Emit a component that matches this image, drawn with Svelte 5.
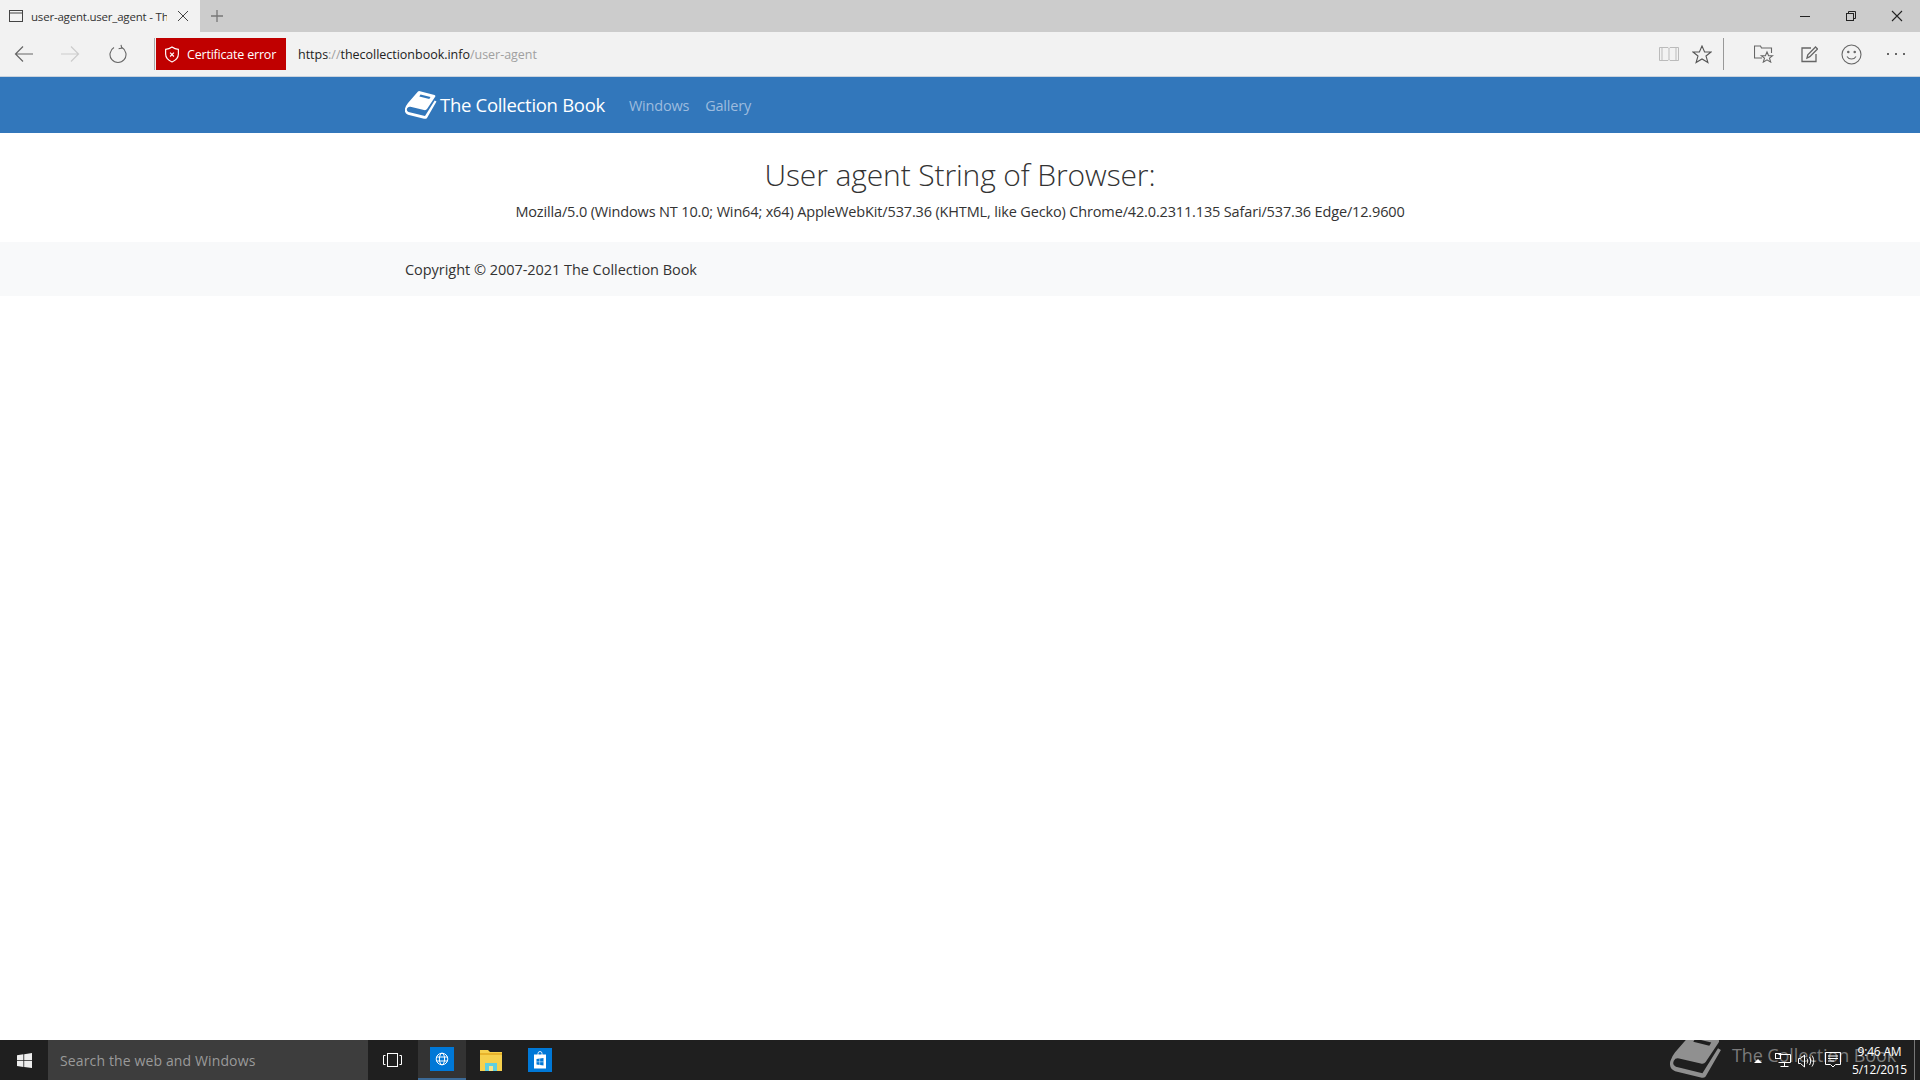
<script>
  const msg = "Mozilla/5.0 (Windows NT 10.0; Win64; x64) AppleWebKit/537.36 (KHTML, like Gecko) Chrome/42.0.2311.135 Safari/537.36 Edge/12.9600";
  const book = "M18 5.500Q18.800 4.800 20 5.200L34.500 9Q36 9.500 35 11L27 23Q26 24.500 24 24L10.500 20.800Q8.200 20.300 7.200 22.200Q6 25 8.500 26L25 30L34.700 14.500L36.500 15.500L27 32Q26 33.200 24 32.700L8 28.800Q4 27.300 5 22.500Q6 19.500 8 17Z";
</script>

<div class="screen">
  <div class="tabbar">
    <div class="tab">
      <svg class="tabicon" width="14" height="12" viewBox="0 0 14 12" fill="none" stroke="#444" stroke-width="1"><rect x=".5" y=".5" width="13" height="11"/><path d="M.5 3h13"/></svg>
      <span class="tabtitle">user-agent.user_agent - The Collection Book</span>
      <svg class="tabx" width="12" height="12" viewBox="0 0 12 12" stroke="#444" stroke-width="1"><path d="M1 1l10 10M11 1L1 11"/></svg>
    </div>
    <svg class="plus" width="12" height="12" viewBox="0 0 12 12" stroke="#777" stroke-width="1.3"><path d="M6 0v12M0 6h12"/></svg>
    <div class="spacer"></div>
    <div class="winbtns">
      <svg width="12" height="12" viewBox="0 0 12 12" stroke="#222"><path d="M1 6.500h10"/></svg>
      <svg width="12" height="12" viewBox="0 0 12 12" stroke="#222" fill="none"><rect x="1.500" y="3.500" width="7" height="7"/><path d="M3.500 3.500v-2h7v7h-2"/></svg>
      <svg width="12" height="12" viewBox="0 0 12 12" stroke="#222" stroke-width="1.100"><path d="M1 1l10 10M11 1L1 11"/></svg>
    </div>
  </div>

  <div class="toolbar">
    <svg class="nav n1" width="20" height="18" viewBox="0 0 20 18" fill="none" stroke="#666" stroke-width="1.200"><path d="M19 9H1.500M9 1.500L1.500 9 9 16.500"/></svg>
    <svg class="nav n2" width="20" height="18" viewBox="0 0 20 18" fill="none" stroke="#ccc" stroke-width="1.200"><path d="M1 9h17.500M11 1.500L18.500 9 11 16.500"/></svg>
    <svg class="nav n3" width="18" height="20" viewBox="0 0 18 20" fill="none" stroke="#666" stroke-width="1.100"><path d="M5 3.600a8 8 0 1 0 8 0M12 .8l.8 3.200-3.200.8"/></svg>
    <div class="divider"></div>
    <div class="cert">
      <svg width="16" height="17" viewBox="0 0 15 16" fill="none" stroke="#fff" stroke-width="1.100"><path d="M7.500 1c1.800 1.300 3.700 2 6 2.100v4.400c0 3.500-2.400 5.900-6 7.500-3.600-1.600-6-4-6-7.500V3.100C3.800 3 5.700 2.300 7.500 1z"/><path d="M5.700 6.300l3.600 3.600M9.300 6.300L5.700 9.900"/></svg>
      <span>Certificate error</span>
    </div>
    <div class="url"><span class="dark">https</span><span class="mute">://</span><span class="dark">thecollectionbook.info</span><span class="mute">/user-agent</span></div>
    <div class="spacer"></div>
    <svg class="tool t1" width="20" height="16" viewBox="0 0 20 16" fill="none" stroke="#bbb" stroke-width="1"><path d="M.5 1.500h8.500l1 1 1-1h8.500v13h-8.500l-1-1-1 1H.5zM10 2.500v11M3 1.500v13M17 1.500v13"/></svg>
    <svg class="tool t2" width="20" height="19" viewBox="0 0 20 19" fill="none" stroke="#555" stroke-width="1.100"><path d="M10 1l2.600 6h6.400l-5 4 1.900 6.500L10 14l-5.900 3.500L6 11 1 7h6.400z"/></svg>
    <div class="divider d2"></div>
    <svg class="tool t3" width="20" height="18" viewBox="0 0 20 18" fill="none" stroke="#666" stroke-width="1.100"><path d="M8 13H.5V1h6l1 2h10v5"/><path d="M13 7l1.600 3.700h4l-3.100 2.400 1.200 4-3.700-2.200-3.700 2.200 1.200-4-3.100-2.400h4z"/></svg>
    <svg class="tool t4" width="17" height="17" viewBox="0 0 17 17" fill="none" stroke="#666" stroke-width="1.300"><path d="M15 8v7.500H1V2h9"/><path d="M6 12l.8-3.200L14.500 1 16.500 3l-7.700 7.700z"/></svg>
    <svg class="tool t5" width="21" height="21" viewBox="0 0 21 21" fill="none" stroke="#666" stroke-width="1.100"><circle cx="10.500" cy="10.500" r="9.500"/><circle cx="7.300" cy="8" r=".7" fill="#666"/><circle cx="13.700" cy="8" r=".7" fill="#666"/><path d="M6 12.500c1.800 3.300 7.200 3.300 9 0"/></svg>
    <div class="dots"><i></i><i></i><i></i></div>
  </div>

  <nav class="navbar">
    <div class="container navinner">
      <a class="brand">
        <svg width="32" height="28" viewBox="5 5 32 28" fill="#fff"><path d={book}/><path d="M20.500 8.500L30.500 10.900 29.300 12.900 19.300 10.500Z" fill="#3277bb"/></svg>
        <span>The Collection Book</span>
      </a>
      <a class="link l1">Windows</a>
      <a class="link">Gallery</a>
    </div>
  </nav>

  <main>
    <h1>User agent String of Browser:</h1>
    <p>{msg}</p>
  </main>

  <footer>
    <div class="container">Copyright © 2007-2021 The Collection Book</div>
  </footer>

  <div class="spacer"></div>

  <div class="taskbar">
    <div class="start">
      <svg width="15" height="15" viewBox="0 0 15 15" fill="#eee"><path d="M0 2.200 6.400 1.300v5.900H0zM7.200 1.200 15 0v7.200H7.200zM0 8h6.400v5.900L0 13zM7.200 8H15v7l-7.800-1.100z"/></svg>
    </div>
    <div class="search">Search the web and Windows</div>
    <div class="tb view">
      <svg width="19" height="14" viewBox="0 0 19 14" fill="none" stroke="#fff"><rect x="4.500" y=".5" width="10" height="13"/><path d="M2.500 2.500H.5v9h2M16.500 2.500h2v9h-2"/></svg>
    </div>
    <div class="tb active">
      <div class="tile small">
        <svg width="14" height="14" viewBox="0 0 14 14" fill="none" stroke="#fff" stroke-width="1"><circle cx="7" cy="7" r="5.800"/><ellipse cx="7" cy="7" rx="2.600" ry="5.800"/><path d="M1.500 5h11M1.500 9h11"/></svg>
      </div>
    </div>
    <div class="tb explorer">
      <svg width="22" height="22" viewBox="0 0 22 22"><path d="M0 1h8l2 2h12v19H0z" fill="#f6d04d"/><path d="M0 4h22v2H0z" fill="#e8b32c"/><path d="M5 14h12v8H5z" fill="#5fcfe0"/><path d="M9 17h4v5H9z" fill="#f6e58d"/></svg>
    </div>
    <div class="tb">
      <div class="tile store">
        <svg width="14" height="18" viewBox="0 0 14 18"><path d="M5 4V2.500a2 2 0 0 1 4 0V4" fill="none" stroke="#dce9f7"/><path d="M1 3.500h12v14H1z" fill="#fff"/><path d="M3.500 8l7-1v7.500l-7-1z" fill="#0078d7"/><path d="M6.700 7.500v6.500M3.500 10.800h7" stroke="#fff" stroke-width=".5"/></svg>
      </div>
    </div>
    <div class="spacer"></div>
    <div class="tray">
      <svg class="wm-icon" width="52" height="45" viewBox="5 5 32 28" fill="#909090"><path d={book}/><path d="M20.500 8.500L30.500 10.900 29.300 12.900 19.300 10.500Z" fill="#1f1f1f"/></svg>
      <span class="wm">The Collection Book</span>
      <div class="trayicons">
        <svg class="caret" width="8" height="5" viewBox="0 0 8 5" fill="#fff"><path d="M0 5l4-4 4 4z"/></svg>
        <svg class="ti net" width="16" height="14" viewBox="0 0 16 14" fill="none" stroke="#fff"><path d="M3.500 1.500h12v8h-12M9.500 9.500v3.500M5.500 13.500h8"/><rect x=".5" y=".5" width="5" height="5"/></svg>
        <svg class="ti vol" width="17" height="14" viewBox="0 0 17 14" fill="none" stroke="#fff"><path d="M.5 4.500h2L6.500 1v12L2.500 9.500h-2zM9 4.500c1 1.500 1 3.500 0 5M11.500 3c1.600 2.500 1.600 5.500 0 8M14 1.500c2.300 3.500 2.300 7.500 0 11"/></svg>
        <svg class="ti msg" width="16" height="16" viewBox="0 0 16 16" fill="none" stroke="#fff"><path d="M.5.500h15v12h-5L8 15l-2.500-2.500h-5zM3 4h10M3 6.500h10M3 9h6"/></svg>
      </div>
      <div class="clock"><div>9:46 AM</div><div>5/12/2015</div></div>
      <div class="showdesk"></div>
    </div>
  </div>
</div>

<style>
  :global(body) { margin: 0; background: #fff; }
  .screen {
    width: 1920px; height: 1080px; display: flex; flex-direction: column; overflow: hidden;
    font-family: "Open Sans", "Noto Sans", sans-serif; color: #212529; background: #fff;
  }
  .spacer { flex: 1; }
  .tabbar { height: 32px; background: #ccc; display: flex; align-items: center; flex: none; }
  .tab { width: 200px; height: 32px; background: #f2f2f2; display: flex; align-items: center; box-sizing: border-box; padding-left: 9px; }
  .tabicon { flex: none; }
  .tabtitle { width: 136px; margin-left: 8px; overflow: hidden; white-space: nowrap; font-size: 11.500px; color: #333; letter-spacing: -.2px; }
  .tabx { margin-left: 10px; flex: none; }
  .plus { margin-left: 11px; }
  .winbtns { display: flex; gap: 34px; padding-right: 17px; align-items: center; }
  .toolbar { height: 44px; background: #f2f2f2; border-bottom: 1px solid #c9d3de; display: flex; align-items: center; flex: none; }
  .nav { flex: none; }
  .n1 { margin-left: 14px; }
  .n2 { margin-left: 26px; }
  .n3 { margin-left: 29px; }
  .divider { width: 1px; height: 32px; background: #aaa; margin-left: 27px; }
  .cert { width: 130px; height: 32px; margin-left: 1px; background: #c00000; color: #fff; display: flex; align-items: center; box-sizing: border-box; padding-left: 8px; font-size: 12.500px; letter-spacing: -.2px; }
  .cert span { margin-left: 7px; }
  .url { margin-left: 12px; font-size: 12.500px; letter-spacing: -.02px; }
  .dark { color: #222; }
  .mute { color: #a0a0a0; }
  .tool { flex: none; }
  .t2 { margin-left: 13px; }
  .d2 { margin-left: 11px; background: #999; }
  .t3 { margin-left: 30px; }
  .t4 { margin-left: 27px; }
  .t5 { margin-left: 23px; }
  .dots { display: flex; gap: 6px; margin-left: 25px; margin-right: 15px; }
  .dots i { width: 2px; height: 2px; background: #666; display: block; }
  .navbar { height: 56px; background: #3277bb; flex: none; }
  .container { width: 1110px; margin: 0 auto; }
  .navinner { height: 100%; display: flex; align-items: center; }
  .brand { display: flex; align-items: center; color: #fff; font-size: 18.500px; letter-spacing: -.3px; }
  .brand span { margin-left: 3px; padding-bottom: 2px; }
  .link { color: #9dbcdf; font-size: 14.500px; letter-spacing: -.2px; margin-left: 16px; }
  .l1 { margin-left: 24px; }
  main { height: 109px; text-align: center; flex: none; padding-top: 24px; box-sizing: border-box; }
  h1 { margin: 0; font-size: 30px; line-height: 36px; font-weight: 300; color: #333; letter-spacing: -.12px; }
  p { margin: 8px 0 0; font-size: 14.500px; line-height: 22px; color: #333; letter-spacing: -.15px; }
  footer { height: 54px; background: #f8f9fa; display: flex; align-items: center; flex: none; font-size: 14.500px; color: #333; letter-spacing: -.04px; }
  .taskbar { height: 40px; background: #1f1f1f; display: flex; flex: none; color: #fff; }
  .start { width: 48px; display: flex; align-items: center; justify-content: center; }
  .search { width: 320px; padding-left: 12px; box-sizing: border-box; background: #3d3d3d; color: #9a9a9a; font-size: 14px; line-height: 42px; letter-spacing: .13px; }
  .tb { width: 49px; display: flex; align-items: center; justify-content: center; box-sizing: border-box; }
  .view { width: 50px; padding-right: 2px; }
  .active { width: 48px; background: #333; border-bottom: 2px solid #3c6a96; }
  .tile { display: flex; align-items: center; justify-content: center; background: #0078d7; width: 24px; height: 24px; }
  .explorer svg { display: block; }
  .tray { display: flex; align-items: center; height: 40px; position: relative; width: 255px; flex: none; overflow: hidden; }
  .wm-icon { position: absolute; left: 5px; top: -7px; }
  .wm { position: absolute; left: 67px; top: 3px; font-size: 18px; color: #7b7b7b; letter-spacing: -.1px; white-space: nowrap; }
  .trayicons { position: absolute; left: 88px; top: 0; height: 40px; width: 100px; }
  .trayicons svg { position: absolute; }
  .caret { left: 1px; top: 18px; }
  .net { left: 22px; top: 13px; }
  .vol { left: 45px; top: 14px; }
  .msg { left: 72px; top: 12px; }
  .clock { position: absolute; right: 13px; top: 3px; text-align: center; font-size: 12px; line-height: 18px; letter-spacing: -.2px; }
  .showdesk { position: absolute; right: 5px; top: 0; width: 1px; height: 40px; background: #777; }
</style>
